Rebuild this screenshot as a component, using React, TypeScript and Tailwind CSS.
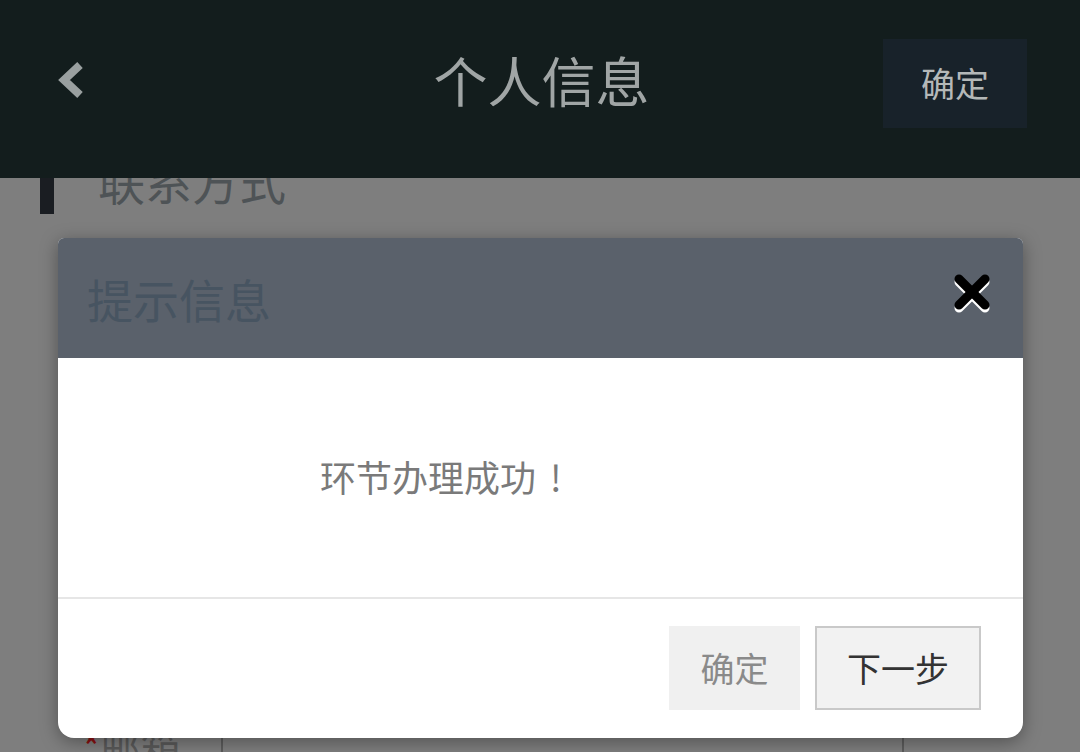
import React from "react";

const font = { fontFamily: '"Noto Sans CJK SC", "Noto Sans", sans-serif' };

function CloseIcon() {
  return (
    <svg width="44" height="44" viewBox="0 0 44 44">
      <g stroke="#ffffff" strokeWidth="9" strokeLinecap="round">
        <line x1="8" y1="11" x2="34" y2="37" />
        <line x1="34" y1="11" x2="8" y2="37" />
      </g>
      <g stroke="#000000" strokeWidth="9" strokeLinecap="round">
        <line x1="8" y1="8" x2="34" y2="34" />
        <line x1="34" y1="8" x2="8" y2="34" />
      </g>
    </svg>
  );
}

export default function App() {
  return (
    <div className="relative w-[1080px] h-[752px] overflow-hidden bg-[#7e7e7e]" style={font}>
      {/* Top bar */}
      <header className="relative z-10 h-[178px] bg-[#131d1d] grid grid-cols-[1fr_auto_1fr] items-center pl-[56px] pr-[53px]">
        <svg width="34" height="40" viewBox="0 0 34 40" className="mt-[-16px]">
          <polyline
            points="24,4 8,19 24,34"
            fill="none"
            stroke="#9aa0a0"
            strokeWidth="8"
            strokeLinejoin="miter"
          />
        </svg>
        <h1 className="text-center text-[54px] leading-none text-[#a0a5a5] mt-[-18px]">
          个人信息
        </h1>
        <button className="justify-self-end w-[144px] h-[89px] mt-[-12px] bg-[#18222a] text-[34px] text-[#b4b8b8] leading-none">
          确定
        </button>
      </header>

      {/* Page content under the overlay */}
      <div className="relative mt-[-16px]">
        <div className="flex items-center pl-[40px] gap-[44px] h-[56px]">
          <span className="w-[14px] h-[48px] bg-[#1a1d22]" />
          <span className="text-[47px] leading-none text-[#4e5356] mt-[-22px]">联系方式</span>
        </div>
        <div className="mt-[508px] flex items-start pl-[82px]">
          <span className="text-[40px] leading-none text-[#5a5a5a]">
            <span className="text-[#8a1010]">*</span>邮箱
          </span>
          <div className="ml-[40px] w-[683px] h-[60px] border-x-2 border-[#5c5c5c] mt-[12px]" />
        </div>
      </div>

      {/* Dialog */}
      <div className="absolute left-[58px] top-[238px] w-[965px] h-[500px] rounded-t-[6px] rounded-b-[16px] bg-white overflow-hidden shadow-[0_4px_18px_rgba(0,0,0,0.35)] flex flex-col">
        <div className="h-[120px] bg-[#5a616b] flex items-center justify-between pl-[29px] pr-[28px]">
          <span className="text-[46px] leading-none text-[#475461]">提示信息</span>
          <span className="mt-[-10px]">
            <CloseIcon />
          </span>
        </div>
        <div className="h-[239px] flex items-center pl-[262px] pb-[4px]">
          <span className="text-[36px] leading-none text-[#7a7a7a]">
            环节办理成功<span className="ml-[14px]">!</span>
          </span>
        </div>
        <div className="h-[2px] bg-[#e6e6e6]" />
        <div className="flex-1 flex justify-end items-start pt-[27px] pr-[42px] gap-[15px]">
          <button className="w-[131px] h-[84px] bg-[#f0f0f0] text-[34px] text-[#8a8a8a] leading-none">
            确定
          </button>
          <button className="w-[166px] h-[84px] bg-[#f2f2f2] border-2 border-[#c9c9c9] text-[34px] text-[#333333] leading-none">
            下一步
          </button>
        </div>
      </div>
    </div>
  );
}
